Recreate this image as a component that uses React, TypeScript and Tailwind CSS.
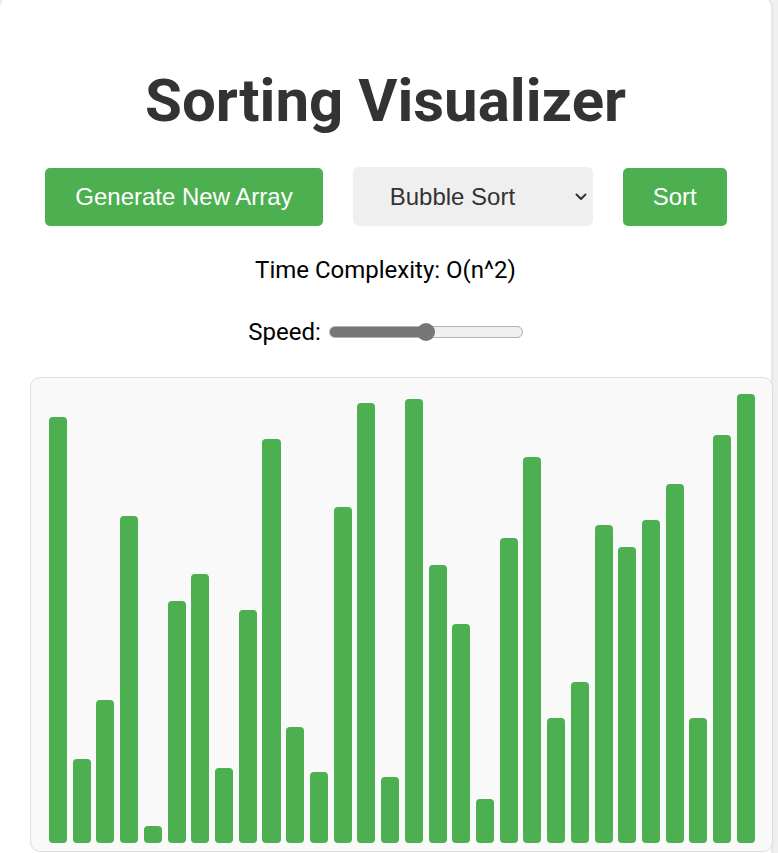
import React, { useState } from "react";

const heights = [426, 84, 143, 327, 17, 242, 269, 75, 233, 404, 116, 71, 336, 440, 66, 444, 278, 219, 44, 305, 386, 125, 161, 318, 296, 323, 359, 125, 408, 449];

export default function App() {
  const [speed, setSpeed] = useState(50);
  const [algo, setAlgo] = useState("bubble");
  const pct = `${speed}%`;
  return (
    <div className="min-h-screen bg-[#f0f0f0] overflow-hidden" style={{ fontFamily: "Roboto, 'Liberation Sans', sans-serif" }}>
      <div className="w-[771px] -mt-[3px] bg-white rounded-[10px] shadow-[0_0_4px_rgba(0,0,0,0.12)] pt-[69px] pb-[40px]">
        <h1 className="text-center text-[60px] font-bold leading-[1.172] text-[#333]">Sorting Visualizer</h1>
        <div className="mt-[31px] flex justify-center items-center gap-[30px] pl-[1px]" style={{ fontFamily: "'Liberation Sans', Arial, sans-serif" }}>
          <button className="h-[58px] px-[30px] bg-[#4caf50] text-white text-[24px] rounded-[5px]">Generate New Array</button>
          <div className="relative">
            <select
              value={algo}
              onChange={(e) => setAlgo(e.target.value)}
              className="appearance-none h-[59px] w-[240px] pl-[37px] pr-[40px] bg-[#efefef] text-[#333] text-[24px] rounded-[6px] outline-none"
            >
              <option value="bubble">Bubble Sort</option>
              <option value="selection">Selection Sort</option>
              <option value="insertion">Insertion Sort</option>
              <option value="merge">Merge Sort</option>
              <option value="quick">Quick Sort</option>
            </select>
            <svg className="absolute right-[6px] top-[26px] pointer-events-none" width="12" height="8" viewBox="0 0 12 8">
              <path d="M1.5 1.5 L6 6 L10.5 1.5" fill="none" stroke="#333" strokeWidth="2" strokeLinecap="round" strokeLinejoin="round" />
            </svg>
          </div>
          <button className="h-[58px] px-[30px] bg-[#4caf50] text-white text-[24px] rounded-[5px]">Sort</button>
        </div>
        <p className="mt-[30px] text-center text-[24px] leading-[1.172] text-black">Time Complexity: O(n^2)</p>
        <div className="mt-[34px] flex justify-center items-center text-[24px] leading-[1.172] text-black">
          <span>Speed:</span>
          <input
            type="range"
            min={0}
            max={100}
            value={speed}
            onChange={(e) => setSpeed(Number(e.target.value))}
            className="ml-[8px] mb-[1px] w-[194px] h-[12px] appearance-none rounded-full border border-[#b2b2b2] outline-none [&::-webkit-slider-thumb]:appearance-none [&::-webkit-slider-thumb]:w-[18px] [&::-webkit-slider-thumb]:h-[18px] [&::-webkit-slider-thumb]:rounded-full [&::-webkit-slider-thumb]:bg-[#767676] [&::-webkit-slider-thumb]:border-0"
            style={{ background: `linear-gradient(to right, #767676 ${pct}, #efefef ${pct})` }}
          />
        </div>
        <div className="mt-[30px] ml-[30px] w-[743px] h-[475px] border border-[#dddddd] rounded-[10px] bg-[#f9f9f9] flex items-end gap-[5.7px] pl-[18px] pr-[17px] pb-[8px]">
          {heights.map((h, i) => (
            <div key={i} className="flex-1 bg-[#4caf50] rounded-[4px]" style={{ height: `${h}px` }} />
          ))}
        </div>
      </div>
    </div>
  );
}
